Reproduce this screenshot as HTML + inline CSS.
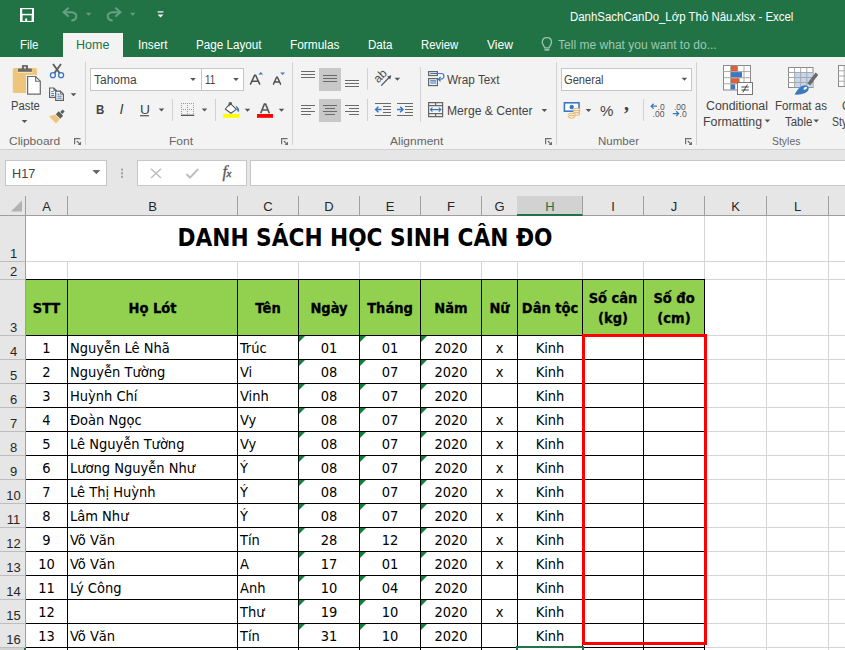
<!DOCTYPE html>
<html lang="vi">
<head>
<meta charset="utf-8">
<title>DanhSachCanDo_Lớp Thỏ Nâu.xlsx - Excel</title>
<style>
*{box-sizing:border-box;margin:0;padding:0}
html,body{width:845px;height:650px;overflow:hidden;background:#fff}
body{position:relative;font-family:"Liberation Sans","DejaVu Sans",sans-serif;font-size:12px;color:#444}
.abs{position:absolute}
#titlebar{position:absolute;left:0;top:0;width:845px;height:57px;background:#217346}
#ribbon{position:absolute;left:0;top:57px;width:845px;height:93px;background:#f3f3f3;border-bottom:1px solid #d0d0d0}
#fbar{position:absolute;left:0;top:150px;width:845px;height:66px;background:#e6e6e6}
.t{position:absolute;white-space:nowrap;line-height:1}
.tab{position:absolute;top:38px;color:#fff;font-size:13px;white-space:nowrap;line-height:15px}
.rl{position:absolute;font-size:12.5px;color:#444;white-space:nowrap;line-height:14px}
.gl{position:absolute;top:134px;font-size:12px;color:#666;white-space:nowrap;line-height:14px}
.sep{position:absolute;top:62px;width:1px;height:83px;background:#d4d4d4}
.box{position:absolute;background:#fff;border:1px solid #c6c6c6}

#hometab{position:absolute;left:63px;top:33px;width:60px;height:24px;background:#f3f3f3}
.lb{position:absolute;white-space:nowrap;transform-origin:0 0;font-family:"Liberation Sans",sans-serif;line-height:normal}
.hl{position:absolute;background:#c8c8c8}
#icons{position:absolute;left:0;top:0;pointer-events:none}
/* sheet */
#sheet{position:absolute;left:0;top:0;width:845px;height:650px;overflow:hidden;font-family:"DejaVu Sans Condensed","DejaVu Sans","Liberation Sans",sans-serif}
#sheet .chs{position:absolute;left:0;top:193px;width:845px;height:23px;background:#e6e6e6;border-bottom:1px solid #9e9e9e}
.ch{position:absolute;top:196px;height:19px;line-height:21px;padding-left:1px;text-align:center;font-size:13px;color:#262626;border-right:1px solid #a0a0a0;font-family:"Liberation Sans",sans-serif}
.ch.sel{background:#d2d2d2;color:#217346;border-bottom:2px solid #217346;top:196px;height:20px;line-height:21px}
.corner{position:absolute;left:0;top:193px}
.rh{position:absolute;left:0;width:26px;background:#e6e6e6;border-right:1px solid #9e9e9e;border-bottom:1px solid #bdbdbd;font-family:"Liberation Sans",sans-serif;font-size:13px;color:#262626;text-align:center}
.rh span{position:absolute;left:2px;right:0px;bottom:0px;line-height:15px}
.gv{position:absolute;top:216px;width:1px;height:434px;background:#d4d4d4}
.gh{position:absolute;left:26px;width:819px;height:1px;background:#d4d4d4}
.title{position:absolute;background:#fff;font-weight:bold;font-size:24.1px;color:#000;text-align:center;line-height:45px;white-space:nowrap}
.hd{position:absolute;background:#92d050;border:1px solid #000;color:#000;font-weight:bold;font-size:14.5px;text-align:center;display:flex;align-items:center;justify-content:center;line-height:20px;white-space:nowrap;padding-top:1px;-webkit-text-stroke:0.3px #000}
.c{position:absolute;background:#fff;border:1px solid #000;color:#000;font-size:14.5px;line-height:23px;padding-top:1px;white-space:nowrap;overflow:hidden}
.c.c{text-align:center}
.c.l{text-align:left;padding-left:2px}
.a{border-left:none !important}
.tri{position:absolute;left:0;top:0;width:0;height:0;border-top:6px solid #15803a;border-right:6px solid transparent}
.rhsel{position:absolute;left:0;width:26px;height:10px;background:#d2d2d2;border-right:2px solid #217346}
.red{position:absolute;left:582px;top:334px;width:125px;height:311px;border:3px solid #ff0000}
.selcell{position:absolute;left:516px;top:646px;width:68px;height:26px;border:2px solid #217346}
</style>
</head>
<body>
<!-- TITLE BAR / TABS -->
<div id="titlebar"></div>
<div id="hometab"></div>
<!-- RIBBON BACKGROUND -->
<div id="ribbon"></div>
<div class="hl" style="left:319px;top:68px;width:22px;height:23px"></div>
<div class="hl" style="left:319px;top:99px;width:22px;height:23px"></div>
<div class="box" style="left:90px;top:68px;width:112px;height:23px"></div>
<div class="box" style="left:201px;top:68px;width:43px;height:23px"></div>
<div class="box" style="left:561px;top:68px;width:131px;height:23px"></div>
<!-- FORMULA BAR -->
<div id="fbar"></div>
<div class="box" style="left:5px;top:160px;width:102px;height:26px"></div>
<div class="box" style="left:137px;top:160px;width:110px;height:26px"></div>
<div class="box" style="left:250px;top:160px;width:600px;height:26px"></div>
<span class="lb" style="left:222.5px;top:162.5px;font-size:16px;color:#5a5a5a;font-family:'Liberation Serif',serif;font-style:italic;-webkit-text-stroke:0.35px #5a5a5a">f<span style="font-size:11px;position:relative;left:-0.5px;top:0.5px">x</span></span>
<span class="lb" style="left:624px;top:91.5px;font-size:20px;color:#444;font-family:'Liberation Serif',serif;font-weight:bold">,</span>
<!-- ICONS -->
<svg id="icons" width="845" height="216" viewBox="0 0 845 216">
<!-- quick access: save -->
<rect x="20" y="8" width="14" height="14" fill="#fff"/>
<rect x="22.2" y="9.2" width="9.8" height="4.6" fill="#217346"/>
<rect x="22.6" y="15.3" width="9" height="5.6" fill="#217346"/>
<rect x="25.2" y="18.4" width="1.9" height="2.6" fill="#fff"/>
<!-- undo / redo (disabled) -->
<g fill="none" stroke="#68a181" stroke-width="2" stroke-linecap="butt" stroke-linejoin="miter">
<path d="M68.6 7.8 L63.6 12.2 L68.6 16.4"/>
<path d="M64.2 12.2 H71 C75.3 12.2 77 14.8 76.2 17.4 C75.6 19.3 73.8 20.3 71.4 20.5"/>
<path d="M115.4 7.8 L120.4 12.2 L115.4 16.4"/>
<path d="M119.8 12.2 H113 C108.7 12.2 107 14.8 107.8 17.4 C108.4 19.3 110.2 20.3 112.6 20.5"/>
</g>
<path d="M85.8 12.8 h5.6 l-2.8 3 z" fill="#659e7e"/>
<path d="M129.9 12.8 h5.6 l-2.8 3 z" fill="#659e7e"/>
<rect x="157.6" y="11.3" width="5.8" height="1.2" fill="#fff"/>
<path d="M157.6 14.4 h5.8 l-2.9 3.2 z" fill="#fff"/>
<!-- lightbulb -->
<path d="M546.9 37.7 C549.9 37.7 551.5 39.8 551.5 42.2 C551.5 44.7 549.5 45.8 549.1 47.9 H544.7 C544.3 45.8 542.3 44.7 542.3 42.2 C542.3 39.8 543.9 37.7 546.9 37.7 Z" fill="none" stroke="#9cc3ad" stroke-width="1.3"/>
<path d="M544.5 49.8 H549.3" fill="none" stroke="#9cc3ad" stroke-width="1.7"/>
<!-- CLIPBOARD GROUP -->
<!-- paste -->
<rect x="12.8" y="67.9" width="24.1" height="25.1" rx="1.6" fill="#edc67c"/>
<rect x="17.4" y="71.7" width="15.2" height="1.2" fill="#f6e3bf"/>
<path d="M18 71.7 V69.4 Q18 68.6 18.8 68.6 H21.9 V65.8 Q21.9 65 22.7 65 H27.2 Q28 65 28 65.8 V68.6 H31.1 Q31.9 68.6 31.9 69.4 V71.7 Z" fill="#6a6a6a"/>
<circle cx="24.95" cy="67.6" r="1.15" fill="#f3e1bd"/>
<path d="M26 74.9 H36.6 L41.9 80.2 V95.8 H26 Z" fill="#f3f3f3"/>
<path d="M27.6 76.5 H35.6 L40.3 81.2 V94.2 H27.6 Z" fill="#fff" stroke="#6a6a6a" stroke-width="1.2" stroke-linejoin="miter"/>
<path d="M35.6 76.5 V81.2 H40.3" fill="none" stroke="#6a6a6a" stroke-width="1.1"/>
<path d="M21.7 120 h5.6 l-2.8 3 z" fill="#555"/>
<!-- cut -->
<path d="M53 64 L59.7 73.3 M61 64 L54.3 73.3" fill="none" stroke="#5e5e5e" stroke-width="1.9"/>
<g fill="none" stroke="#3b78c0" stroke-width="1.3">
<circle cx="52.9" cy="75.2" r="2.5"/><circle cx="61.1" cy="75.2" r="2.5"/>
</g>
<!-- copy -->
<g fill="#fff" stroke="#5f5f5f" stroke-width="1.2">
<path d="M49.6 88 H53.8 L56.4 90.6 V97.3 H49.6 Z"/>
<path d="M55.7 91.2 H60.4 L63.4 94.2 V100.3 H55.7 Z"/>
</g>
<path d="M53.8 88 V90.6 H56.4 M60.4 91.2 V94.2 H63.4" fill="none" stroke="#5f5f5f" stroke-width="0.9"/>
<path d="M51.2 91.6 H53.6 M51.2 93.6 H54.2 M51.2 95.5 H54.2 M57.4 94.2 H59.4 M57.4 96.2 H61.8 M57.4 98.2 H61.8" stroke="#3b78c0" stroke-width="1" fill="none"/>
<path d="M70.7 93.2 h5.6 l-2.8 3 z" fill="#555"/>
<!-- format painter -->
<path d="M62.6 109.5 L64.7 111.6 L62.3 114 L60.2 111.9 Z" fill="#5e5e5e"/>
<path d="M58.7 111.3 L63.1 115.7 L60.3 118.7 L55.8 114.2 Z" fill="#5e5e5e"/>
<path d="M55.1 114.6 L59.8 119.3 L56 123.5 L49.1 116.6 Z" fill="#edc67c"/>
<!-- dialog launchers -->
<path d="M80.5 138.7 H74.6 V144.3" fill="none" stroke="#6e6e6e" stroke-width="1.2"/><path d="M76.8 141 L80 144.2" fill="none" stroke="#6e6e6e" stroke-width="1.2"/><path d="M81 141.6 V145 H77.6 Z" fill="#6e6e6e"/>
<path d="M287.5 138.7 H281.6 V144.3" fill="none" stroke="#6e6e6e" stroke-width="1.2"/><path d="M283.8 141 L287 144.2" fill="none" stroke="#6e6e6e" stroke-width="1.2"/><path d="M288 141.6 V145 H284.6 Z" fill="#6e6e6e"/>
<path d="M551.5 138.7 H545.6 V144.3" fill="none" stroke="#6e6e6e" stroke-width="1.2"/><path d="M547.8 141 L551 144.2" fill="none" stroke="#6e6e6e" stroke-width="1.2"/><path d="M552 141.6 V145 H548.6 Z" fill="#6e6e6e"/>
<path d="M691.5 138.7 H685.6 V144.3" fill="none" stroke="#6e6e6e" stroke-width="1.2"/><path d="M687.8 141 L691 144.2" fill="none" stroke="#6e6e6e" stroke-width="1.2"/><path d="M692 141.6 V145 H688.6 Z" fill="#6e6e6e"/>
<!-- group separators -->
<g stroke="#d2d2d2" stroke-width="1">
<path d="M85.5 62 V145 M292.5 62 V145 M556.5 62 V145 M696.5 62 V145"/>
<path d="M172.5 99 V121 M215.5 99 V121 M367.5 68 V90 M367.5 99 V121 M420.5 67 V122 M643.5 99 V121"/>
</g>
<!-- FONT GROUP -->
<path d="M190.2 78 h5.6 l-2.8 3 z" fill="#555"/>
<path d="M233.2 78 h5.6 l-2.8 3 z" fill="#555"/>
<!-- grow / shrink font -->
<path d="M250.3 84.6 L254.6 75.2 H255.6 L259.9 84.6 M251.9 81.3 H258.3" fill="none" stroke="#505050" stroke-width="1.5"/>
<path d="M258.4 74.6 L260.8 72 L263.2 74.6 Z" fill="#3a78c4"/>
<path d="M273.2 84.6 L276.6 77.2 H277.4 L280.8 84.6 M274.5 82 H279.5" fill="none" stroke="#505050" stroke-width="1.4"/>
<path d="M280.2 72.4 H285 L282.6 75 Z" fill="#3a78c4"/>
<!-- underline bar for U -->
<rect x="140" y="115.2" width="9" height="1.1" fill="#444"/>
<path d="M158.7 108.6 h5.6 l-2.8 3 z" fill="#555"/>
<!-- borders icon -->
<g stroke="#9a9a9a" stroke-width="1" stroke-dasharray="1 1" fill="none">
<path d="M181 103.5 H195 M181 109.5 H195 M181.5 103 V115 M187.5 103 V115 M193.5 103 V115"/>
</g>
<path d="M181 115.3 H194.2" stroke="#505050" stroke-width="1.3"/>
<path d="M201.7 108.6 h5.6 l-2.8 3 z" fill="#555"/>
<!-- fill color -->
<path d="M225.3 109 L230.2 103.3 L236.4 109.4 L230.9 113.2 Z" fill="#fff" stroke="#555" stroke-width="1.1" stroke-linejoin="round"/>
<path d="M229.2 106.4 V102.6 H231.4 V105" fill="none" stroke="#555" stroke-width="1"/>
<path d="M235.4 105.6 Q240 108 239 111.7 Q237.4 112.2 237 109.7 Q236.6 107.5 235.4 105.6 Z" fill="#3b78c0"/>
<rect x="223" y="114" width="16" height="3.8" fill="#ffff00"/>
<path d="M244.7 108.8 h5.6 l-2.8 3 z" fill="#555"/>
<!-- font color -->
<path d="M260.7 113.3 L264.4 104 H265.6 L269.3 113.3 M262.2 110 H267.8" fill="none" stroke="#595959" stroke-width="1.7"/>
<rect x="257" y="114" width="16" height="3.8" fill="#ff0000"/>
<path d="M278.7 108.8 h5.6 l-2.8 3 z" fill="#555"/>
<!-- ALIGNMENT GROUP -->
<g stroke="#6a6a6a" stroke-width="1" fill="none">
<path d="M301 71.5 H315 M301 74.5 H315 M301 77.5 H315"/>
<path d="M323 75.5 H337 M323 78.5 H337 M323 81.5 H337"/>
<path d="M345 80.5 H359 M345 83.5 H359 M345 86.5 H359"/>
<path d="M301 105.5 H315 M301 108.5 H311 M301 111.5 H315 M301 114.5 H311"/>
<path d="M323 105.5 H337 M325 108.5 H335 M323 105.5 M323 111.5 H337 M325 114.5 H335"/>
<path d="M345 105.5 H359 M349 108.5 H359 M345 111.5 H359 M349 114.5 H359"/>
<path d="M375 103.5 H391 M375 115.5 H391 M383 106.5 H391 M383 109.5 H391 M383 112.5 H391"/>
<path d="M397 103.5 H413 M397 115.5 H413 M405 106.5 H413 M405 109.5 H413 M405 112.5 H413"/>
</g>
<g stroke="#3a78c4" stroke-width="1.5" fill="none">
<path d="M375.6 109.5 H381.6 M378.4 106.7 L375.6 109.5 L378.4 112.3"/>
<path d="M397 109.5 H403 M400.2 106.7 L403 109.5 L400.2 112.3"/>
</g>
<!-- orientation -->
<g transform="translate(378.2,83.4) rotate(-45)">
<text x="0" y="0" font-family="Liberation Sans, sans-serif" font-size="12" fill="#4a4a4a">ab</text>
</g>
<path d="M381.2 85.6 L389.6 77" fill="none" stroke="#555" stroke-width="1.3"/><path d="M391.4 75.2 L387.2 76.4 L390.2 79.4 Z" fill="#555"/>
<path d="M394.6 77.8 h5.6 l-2.8 3 z" fill="#555"/>
<!-- wrap text icon -->
<g fill="none" stroke="#666" stroke-width="1.2">
<rect x="428.6" y="71.6" width="8.8" height="3.9"/>
<rect x="428.6" y="78.6" width="8.8" height="7"/>
</g>
<path d="M430.2 73.5 H441.4 Q443.9 73.5 443.9 76 Q443.9 79.2 440.6 79.2 H438.6 M440.6 77 L438.4 79.2 L440.6 81.4 M430.2 80.8 H436 M430.2 83 H436" fill="none" stroke="#3b78c0" stroke-width="1.2"/>
<!-- merge icon -->
<g fill="none" stroke="#666" stroke-width="1.2">
<path d="M428.6 102.6 H442.6 V116.6 H428.6 Z M428.6 105.6 H442.6 M428.6 113.6 H442.6 M435.6 102.6 V105.6 M435.6 113.6 V116.6"/>
</g>
<path d="M430.4 109.6 H440.8 M432.4 107.6 L430.4 109.6 L432.4 111.6 M438.8 107.6 L440.8 109.6 L438.8 111.6" fill="none" stroke="#3b78c0" stroke-width="1.2"/>
<path d="M541.6 108.9 h5.6 l-2.8 3 z" fill="#555"/>
<!-- NUMBER GROUP -->
<path d="M681.6 77.8 h5.6 l-2.8 3 z" fill="#555"/>
<!-- currency -->
<rect x="564.4" y="102.8" width="14.6" height="8.4" fill="#fff" stroke="#3a78c4" stroke-width="1.6"/>
<circle cx="571.7" cy="107" r="2.2" fill="#3a78c4"/>
<g fill="#f3f3f3" stroke="#e8b55e" stroke-width="1">
<ellipse cx="576.6" cy="109.6" rx="3.4" ry="1.3"/><ellipse cx="576.6" cy="111.8" rx="3.4" ry="1.3"/><ellipse cx="576.6" cy="114" rx="3.4" ry="1.3"/>
<ellipse cx="571.6" cy="114.6" rx="3.4" ry="1.3"/><ellipse cx="571.6" cy="116.8" rx="3.4" ry="1.3"/>
</g>
<path d="M585.7 108.9 h5.6 l-2.8 3 z" fill="#555"/>
<!-- inc / dec decimal -->
<g font-family="Liberation Sans, sans-serif" font-size="8.5" fill="#555">
<text x="657.6" y="109.6">.0</text><text x="652.6" y="116.6">.00</text>
<text x="674" y="109.6">.00</text><text x="679.6" y="116.6">.0</text>
</g>
<g fill="none" stroke="#3a78c4" stroke-width="1.3">
<path d="M651.2 106.2 H657 M653.6 103.8 L651.2 106.2 L653.6 108.6"/>
<path d="M672.8 113.6 H678.6 M676.2 111.2 L678.6 113.6 L676.2 116"/>
</g>
<!-- STYLES GROUP -->
<!-- conditional formatting -->
<rect x="723.5" y="65.5" width="27" height="24.5" fill="#fff" stroke="#8a8a8a" stroke-width="1"/>
<path d="M723.5 71.6 H750.5 M723.5 77.7 H750.5 M723.5 83.8 H750.5 M730.5 65.5 V90 M737.5 65.5 V90 M744 65.5 V90" stroke="#a8a8a8" stroke-width="1" fill="none"/>
<rect x="731" y="66" width="6.4" height="5.2" fill="#e0603a"/>
<rect x="731" y="72.1" width="11" height="5.2" fill="#3a78c4"/>
<rect x="731" y="78.2" width="8.6" height="5.2" fill="#e0603a"/>
<rect x="731" y="84.3" width="4.2" height="5.2" fill="#3a78c4"/>
<rect x="737.5" y="82.5" width="15" height="12" fill="#fff" stroke="#777" stroke-width="1"/>
<path d="M741.4 87 H748.8 M741.4 90 H748.8 M747.4 84.6 L742.8 92.4" stroke="#444" stroke-width="1" fill="none"/>
<path d="M764.6 119.5 h5.6 l-2.8 3 z" fill="#555"/>
<!-- format as table -->
<rect x="788.5" y="67.5" width="24.5" height="20" fill="#fff" stroke="#8a8a8a" stroke-width="1"/>
<rect x="795" y="72.6" width="17.6" height="14.6" fill="#c3d8ef"/>
<path d="M788.5 72.5 H813 M788.5 77.5 H813 M788.5 82.5 H813 M794.6 67.5 V87.5 M800.7 67.5 V87.5 M806.8 67.5 V87.5" stroke="#a8a8a8" stroke-width="1" fill="none"/>
<path d="M807.4 83.2 L815.6 72.6 L818.3 74.8 L810.2 85.6 Z" fill="#6b6b6b"/>
<path d="M794.6 94.6 Q798.4 87.6 802.4 85.8 Q806.4 84.2 808.6 87.2 Q809.4 90.8 805.2 93 Q800.6 95 794.6 94.6 Z" fill="#3a78c4"/>
<ellipse cx="805.3" cy="88.2" rx="1.9" ry="1.2" fill="#fff" transform="rotate(-30 805.3 88.2)"/>
<path d="M813.4 119.5 h5.6 l-2.8 3 z" fill="#555"/>
<!-- cell styles (cut off) -->
<rect x="838.5" y="65.5" width="12" height="21" fill="#fff" stroke="#8a8a8a" stroke-width="1"/>
<path d="M838.5 70.8 H850 M838.5 76 H850 M838.5 81.2 H850 M844.2 65.5 V86.5" stroke="#a8a8a8" stroke-width="1" fill="none"/>
<!-- FORMULA BAR ICONS -->
<path d="M92.4 170 h8 l-4 4.2 z" fill="#666"/>
<g fill="#a2a2a2"><rect x="121" y="168.6" width="2" height="2"/><rect x="121" y="172.2" width="2" height="2"/><rect x="121" y="175.8" width="2" height="2"/></g>
<path d="M151 168.8 L161 178 M161 168.8 L151 178" stroke="#bdbdbd" stroke-width="1.5" fill="none"/>
<path d="M186.4 174 L190 177.6 L198.2 169" stroke="#bdbdbd" stroke-width="1.9" fill="none"/>
</svg>
<!-- LABELS -->
<span class="lb" style="left:569.8px;top:9.6px;font-size:12px;color:#fff;transform:scaleX(0.953);">DanhSachCanDo_Lớp Thỏ Nâu.xlsx - Excel</span>
<span class="lb" style="left:20.0px;top:38.3px;font-size:12px;color:#fff;transform:scaleX(0.956);">File</span>
<span class="lb" style="left:75.7px;top:38.3px;font-size:12px;color:#217346;transform:scaleX(1.046);">Home</span>
<span class="lb" style="left:137.7px;top:38.3px;font-size:12px;color:#fff;transform:scaleX(0.983);">Insert</span>
<span class="lb" style="left:196.0px;top:38.3px;font-size:12px;color:#fff;transform:scaleX(0.972);">Page Layout</span>
<span class="lb" style="left:290.1px;top:38.3px;font-size:12px;color:#fff;transform:scaleX(0.988);">Formulas</span>
<span class="lb" style="left:368.0px;top:38.3px;font-size:12px;color:#fff;transform:scaleX(0.966);">Data</span>
<span class="lb" style="left:421.3px;top:38.3px;font-size:12px;color:#fff;transform:scaleX(0.945);">Review</span>
<span class="lb" style="left:486.5px;top:38.3px;font-size:12px;color:#fff;transform:scaleX(1.008);">View</span>
<span class="lb" style="left:558.2px;top:38.3px;font-size:12px;color:#a0c7b1;transform:scaleX(1.004);">Tell me what you want to do...</span>
<span class="lb" style="left:10.9px;top:99.0px;font-size:12px;color:#444;transform:scaleX(0.938);">Paste</span>
<span class="lb" style="left:9.0px;top:134.9px;font-size:11.3px;color:#666;transform:scaleX(1.059);">Clipboard</span>
<span class="lb" style="left:169.0px;top:134.9px;font-size:11.3px;color:#666;transform:scaleX(1.066);">Font</span>
<span class="lb" style="left:389.7px;top:134.9px;font-size:11.3px;color:#666;transform:scaleX(1.061);">Alignment</span>
<span class="lb" style="left:598.3px;top:134.9px;font-size:11.3px;color:#666;transform:scaleX(1.020);">Number</span>
<span class="lb" style="left:772.1px;top:134.9px;font-size:11.3px;color:#666;transform:scaleX(0.923);">Styles</span>
<span class="lb" style="left:93.9px;top:73.2px;font-size:12px;color:#444;transform:scaleX(0.998);">Tahoma</span>
<span class="lb" style="left:205.0px;top:73.2px;font-size:12px;color:#444;transform:scaleX(0.818);">11</span>
<span class="lb" style="left:564.2px;top:73.0px;font-size:12px;color:#444;transform:scaleX(0.927);">General</span>
<span class="lb" style="left:446.5px;top:73.2px;font-size:12px;color:#444;transform:scaleX(0.978);">Wrap Text</span>
<span class="lb" style="left:446.5px;top:103.9px;font-size:12px;color:#444;transform:scaleX(1.011);">Merge &amp; Center</span>
<span class="lb" style="left:706.0px;top:98.9px;font-size:12px;color:#444;transform:scaleX(1.031);">Conditional</span>
<span class="lb" style="left:703.0px;top:115.1px;font-size:12px;color:#444;transform:scaleX(1.030);">Formatting</span>
<span class="lb" style="left:775.3px;top:98.9px;font-size:12px;color:#444;transform:scaleX(0.961);">Format as</span>
<span class="lb" style="left:784.5px;top:115.1px;font-size:12px;color:#444;transform:scaleX(0.952);">Table</span>
<span class="lb" style="left:841.5px;top:98.9px;font-size:12px;color:#444;transform:scaleX(0.943);">Cell</span>
<span class="lb" style="left:831.5px;top:115.1px;font-size:12px;color:#444;transform:scaleX(0.872);">Styles</span>
<span class="lb" style="left:96.2px;top:102.2px;font-size:13px;color:#444;transform:scaleX(0.884);font-weight:bold;">B</span>
<span class="lb" style="left:119.5px;top:101.1px;font-size:14.5px;color:#444;transform:scaleX(1.000);font-style:italic;font-family:"Liberation Serif",serif;">I</span>
<span class="lb" style="left:139.5px;top:102.2px;font-size:13px;color:#444;transform:scaleX(1.065);">U</span>
<span class="lb" style="left:600.1px;top:102.1px;font-size:15px;color:#444;transform:scaleX(1.004);">%</span>
<span class="lb" style="left:12.1px;top:166.5px;font-size:12px;color:#444;transform:scaleX(1.054);">H17</span><!-- SHEET -->
<div id="sheet">
<div class="chs"></div>
<div class="ch" style="left:25px;width:43px">A</div>
<div class="ch" style="left:67px;width:171px">B</div>
<div class="ch" style="left:237px;width:62px">C</div>
<div class="ch" style="left:298px;width:62px">D</div>
<div class="ch" style="left:359px;width:62px">E</div>
<div class="ch" style="left:420px;width:62px">F</div>
<div class="ch" style="left:481px;width:37px">G</div>
<div class="ch sel" style="left:517px;width:66px">H</div>
<div class="ch" style="left:582px;width:62px">I</div>
<div class="ch" style="left:643px;width:62px">J</div>
<div class="ch" style="left:704px;width:63px">K</div>
<div class="ch" style="left:766px;width:63px">L</div>
<div class="ch" style="left:828px;width:63px">M</div>
<svg class="corner" width="25" height="22" viewBox="0 0 25 22"><path d="M22 7.4 L22 18.6 L10.8 18.6 Z" fill="#b2b2b2"/></svg>
<div style="position:absolute;left:25px;top:196px;width:1px;height:20px;background:#9e9e9e"></div>
<div class="rh" style="top:216px;height:46px"><span>1</span></div>
<div class="rh" style="top:262px;height:18px"><span>2</span></div>
<div class="rh" style="top:280px;height:56px"><span>3</span></div>
<div class="rh" style="top:336px;height:24px"><span>4</span></div>
<div class="rh" style="top:360px;height:24px"><span>5</span></div>
<div class="rh" style="top:384px;height:24px"><span>6</span></div>
<div class="rh" style="top:408px;height:24px"><span>7</span></div>
<div class="rh" style="top:432px;height:24px"><span>8</span></div>
<div class="rh" style="top:456px;height:24px"><span>9</span></div>
<div class="rh" style="top:480px;height:24px"><span>10</span></div>
<div class="rh" style="top:504px;height:24px"><span>11</span></div>
<div class="rh" style="top:528px;height:24px"><span>12</span></div>
<div class="rh" style="top:552px;height:24px"><span>13</span></div>
<div class="rh" style="top:576px;height:24px"><span>14</span></div>
<div class="rh" style="top:600px;height:24px"><span>15</span></div>
<div class="rh" style="top:624px;height:24px"><span>16</span></div>
<div class="rh" style="top:648px;height:24px"><span>17</span></div>
<div class="gv" style="left:67px"></div>
<div class="gv" style="left:237px"></div>
<div class="gv" style="left:298px"></div>
<div class="gv" style="left:359px"></div>
<div class="gv" style="left:420px"></div>
<div class="gv" style="left:481px"></div>
<div class="gv" style="left:517px"></div>
<div class="gv" style="left:582px"></div>
<div class="gv" style="left:643px"></div>
<div class="gv" style="left:704px"></div>
<div class="gv" style="left:766px"></div>
<div class="gv" style="left:828px"></div>
<div class="gv" style="left:890px"></div>
<div class="gh" style="top:261px"></div>
<div class="gh" style="top:279px"></div>
<div class="gh" style="top:335px"></div>
<div class="gh" style="top:359px"></div>
<div class="gh" style="top:383px"></div>
<div class="gh" style="top:407px"></div>
<div class="gh" style="top:431px"></div>
<div class="gh" style="top:455px"></div>
<div class="gh" style="top:479px"></div>
<div class="gh" style="top:503px"></div>
<div class="gh" style="top:527px"></div>
<div class="gh" style="top:551px"></div>
<div class="gh" style="top:575px"></div>
<div class="gh" style="top:599px"></div>
<div class="gh" style="top:623px"></div>
<div class="gh" style="top:647px"></div>
<div class="gh" style="top:671px"></div>
<div class="title" style="left:26px;top:216px;width:678px;height:45px">DANH SÁCH HỌC SINH CÂN ĐO</div>
<div class="hd a" style="left:26px;top:279px;width:42px;height:57px"><span>STT</span></div>
<div class="hd" style="left:67px;top:279px;width:171px;height:57px"><span>Họ Lót</span></div>
<div class="hd" style="left:237px;top:279px;width:62px;height:57px"><span>Tên</span></div>
<div class="hd" style="left:298px;top:279px;width:62px;height:57px"><span>Ngày</span></div>
<div class="hd" style="left:359px;top:279px;width:62px;height:57px"><span>Tháng</span></div>
<div class="hd" style="left:420px;top:279px;width:62px;height:57px"><span>Năm</span></div>
<div class="hd" style="left:481px;top:279px;width:37px;height:57px"><span>Nữ</span></div>
<div class="hd" style="left:517px;top:279px;width:66px;height:57px"><span>Dân tộc</span></div>
<div class="hd" style="left:582px;top:279px;width:62px;height:57px"><span>Số cân<br>(kg)</span></div>
<div class="hd" style="left:643px;top:279px;width:62px;height:57px"><span>Số đo<br>(cm)</span></div>
<div class="c c a" style="left:26px;top:335px;width:42px;height:25px">1</div>
<div class="c l" style="left:67px;top:335px;width:171px;height:25px">Nguyễn Lê Nhã</div>
<div class="c l" style="left:237px;top:335px;width:62px;height:25px">Trúc</div>
<div class="c c" style="left:298px;top:335px;width:62px;height:25px"><i class="tri"></i>01</div>
<div class="c c" style="left:359px;top:335px;width:62px;height:25px"><i class="tri"></i>01</div>
<div class="c c" style="left:420px;top:335px;width:62px;height:25px"><i class="tri"></i>2020</div>
<div class="c c" style="left:481px;top:335px;width:37px;height:25px">x</div>
<div class="c c" style="left:517px;top:335px;width:66px;height:25px">Kinh</div>
<div class="c c" style="left:582px;top:335px;width:62px;height:25px"></div>
<div class="c c" style="left:643px;top:335px;width:62px;height:25px"></div>
<div class="c c a" style="left:26px;top:359px;width:42px;height:25px">2</div>
<div class="c l" style="left:67px;top:359px;width:171px;height:25px">Nguyễn Tường</div>
<div class="c l" style="left:237px;top:359px;width:62px;height:25px">Vi</div>
<div class="c c" style="left:298px;top:359px;width:62px;height:25px"><i class="tri"></i>08</div>
<div class="c c" style="left:359px;top:359px;width:62px;height:25px"><i class="tri"></i>07</div>
<div class="c c" style="left:420px;top:359px;width:62px;height:25px"><i class="tri"></i>2020</div>
<div class="c c" style="left:481px;top:359px;width:37px;height:25px">x</div>
<div class="c c" style="left:517px;top:359px;width:66px;height:25px">Kinh</div>
<div class="c c" style="left:582px;top:359px;width:62px;height:25px"></div>
<div class="c c" style="left:643px;top:359px;width:62px;height:25px"></div>
<div class="c c a" style="left:26px;top:383px;width:42px;height:25px">3</div>
<div class="c l" style="left:67px;top:383px;width:171px;height:25px">Huỳnh Chí</div>
<div class="c l" style="left:237px;top:383px;width:62px;height:25px">Vinh</div>
<div class="c c" style="left:298px;top:383px;width:62px;height:25px"><i class="tri"></i>08</div>
<div class="c c" style="left:359px;top:383px;width:62px;height:25px"><i class="tri"></i>07</div>
<div class="c c" style="left:420px;top:383px;width:62px;height:25px"><i class="tri"></i>2020</div>
<div class="c c" style="left:481px;top:383px;width:37px;height:25px"></div>
<div class="c c" style="left:517px;top:383px;width:66px;height:25px">Kinh</div>
<div class="c c" style="left:582px;top:383px;width:62px;height:25px"></div>
<div class="c c" style="left:643px;top:383px;width:62px;height:25px"></div>
<div class="c c a" style="left:26px;top:407px;width:42px;height:25px">4</div>
<div class="c l" style="left:67px;top:407px;width:171px;height:25px">Đoàn Ngọc</div>
<div class="c l" style="left:237px;top:407px;width:62px;height:25px">Vy</div>
<div class="c c" style="left:298px;top:407px;width:62px;height:25px"><i class="tri"></i>08</div>
<div class="c c" style="left:359px;top:407px;width:62px;height:25px"><i class="tri"></i>07</div>
<div class="c c" style="left:420px;top:407px;width:62px;height:25px"><i class="tri"></i>2020</div>
<div class="c c" style="left:481px;top:407px;width:37px;height:25px">x</div>
<div class="c c" style="left:517px;top:407px;width:66px;height:25px">Kinh</div>
<div class="c c" style="left:582px;top:407px;width:62px;height:25px"></div>
<div class="c c" style="left:643px;top:407px;width:62px;height:25px"></div>
<div class="c c a" style="left:26px;top:431px;width:42px;height:25px">5</div>
<div class="c l" style="left:67px;top:431px;width:171px;height:25px">Lê Nguyễn Tường</div>
<div class="c l" style="left:237px;top:431px;width:62px;height:25px">Vy</div>
<div class="c c" style="left:298px;top:431px;width:62px;height:25px"><i class="tri"></i>08</div>
<div class="c c" style="left:359px;top:431px;width:62px;height:25px"><i class="tri"></i>07</div>
<div class="c c" style="left:420px;top:431px;width:62px;height:25px"><i class="tri"></i>2020</div>
<div class="c c" style="left:481px;top:431px;width:37px;height:25px">x</div>
<div class="c c" style="left:517px;top:431px;width:66px;height:25px">Kinh</div>
<div class="c c" style="left:582px;top:431px;width:62px;height:25px"></div>
<div class="c c" style="left:643px;top:431px;width:62px;height:25px"></div>
<div class="c c a" style="left:26px;top:455px;width:42px;height:25px">6</div>
<div class="c l" style="left:67px;top:455px;width:171px;height:25px">Lương Nguyễn Như</div>
<div class="c l" style="left:237px;top:455px;width:62px;height:25px">Ý</div>
<div class="c c" style="left:298px;top:455px;width:62px;height:25px"><i class="tri"></i>08</div>
<div class="c c" style="left:359px;top:455px;width:62px;height:25px"><i class="tri"></i>07</div>
<div class="c c" style="left:420px;top:455px;width:62px;height:25px"><i class="tri"></i>2020</div>
<div class="c c" style="left:481px;top:455px;width:37px;height:25px">x</div>
<div class="c c" style="left:517px;top:455px;width:66px;height:25px">Kinh</div>
<div class="c c" style="left:582px;top:455px;width:62px;height:25px"></div>
<div class="c c" style="left:643px;top:455px;width:62px;height:25px"></div>
<div class="c c a" style="left:26px;top:479px;width:42px;height:25px">7</div>
<div class="c l" style="left:67px;top:479px;width:171px;height:25px">Lê Thị Huỳnh</div>
<div class="c l" style="left:237px;top:479px;width:62px;height:25px">Ý</div>
<div class="c c" style="left:298px;top:479px;width:62px;height:25px"><i class="tri"></i>08</div>
<div class="c c" style="left:359px;top:479px;width:62px;height:25px"><i class="tri"></i>07</div>
<div class="c c" style="left:420px;top:479px;width:62px;height:25px"><i class="tri"></i>2020</div>
<div class="c c" style="left:481px;top:479px;width:37px;height:25px">x</div>
<div class="c c" style="left:517px;top:479px;width:66px;height:25px">Kinh</div>
<div class="c c" style="left:582px;top:479px;width:62px;height:25px"></div>
<div class="c c" style="left:643px;top:479px;width:62px;height:25px"></div>
<div class="c c a" style="left:26px;top:503px;width:42px;height:25px">8</div>
<div class="c l" style="left:67px;top:503px;width:171px;height:25px">Lâm Như</div>
<div class="c l" style="left:237px;top:503px;width:62px;height:25px">Ý</div>
<div class="c c" style="left:298px;top:503px;width:62px;height:25px"><i class="tri"></i>08</div>
<div class="c c" style="left:359px;top:503px;width:62px;height:25px"><i class="tri"></i>07</div>
<div class="c c" style="left:420px;top:503px;width:62px;height:25px"><i class="tri"></i>2020</div>
<div class="c c" style="left:481px;top:503px;width:37px;height:25px">x</div>
<div class="c c" style="left:517px;top:503px;width:66px;height:25px">Kinh</div>
<div class="c c" style="left:582px;top:503px;width:62px;height:25px"></div>
<div class="c c" style="left:643px;top:503px;width:62px;height:25px"></div>
<div class="c c a" style="left:26px;top:527px;width:42px;height:25px">9</div>
<div class="c l" style="left:67px;top:527px;width:171px;height:25px">Võ Văn</div>
<div class="c l" style="left:237px;top:527px;width:62px;height:25px">Tín</div>
<div class="c c" style="left:298px;top:527px;width:62px;height:25px"><i class="tri"></i>28</div>
<div class="c c" style="left:359px;top:527px;width:62px;height:25px"><i class="tri"></i>12</div>
<div class="c c" style="left:420px;top:527px;width:62px;height:25px"><i class="tri"></i>2020</div>
<div class="c c" style="left:481px;top:527px;width:37px;height:25px">x</div>
<div class="c c" style="left:517px;top:527px;width:66px;height:25px">Kinh</div>
<div class="c c" style="left:582px;top:527px;width:62px;height:25px"></div>
<div class="c c" style="left:643px;top:527px;width:62px;height:25px"></div>
<div class="c c a" style="left:26px;top:551px;width:42px;height:25px">10</div>
<div class="c l" style="left:67px;top:551px;width:171px;height:25px">Võ Văn</div>
<div class="c l" style="left:237px;top:551px;width:62px;height:25px">A</div>
<div class="c c" style="left:298px;top:551px;width:62px;height:25px"><i class="tri"></i>17</div>
<div class="c c" style="left:359px;top:551px;width:62px;height:25px"><i class="tri"></i>01</div>
<div class="c c" style="left:420px;top:551px;width:62px;height:25px"><i class="tri"></i>2020</div>
<div class="c c" style="left:481px;top:551px;width:37px;height:25px">x</div>
<div class="c c" style="left:517px;top:551px;width:66px;height:25px">Kinh</div>
<div class="c c" style="left:582px;top:551px;width:62px;height:25px"></div>
<div class="c c" style="left:643px;top:551px;width:62px;height:25px"></div>
<div class="c c a" style="left:26px;top:575px;width:42px;height:25px">11</div>
<div class="c l" style="left:67px;top:575px;width:171px;height:25px">Lý Công</div>
<div class="c l" style="left:237px;top:575px;width:62px;height:25px">Anh</div>
<div class="c c" style="left:298px;top:575px;width:62px;height:25px"><i class="tri"></i>10</div>
<div class="c c" style="left:359px;top:575px;width:62px;height:25px"><i class="tri"></i>04</div>
<div class="c c" style="left:420px;top:575px;width:62px;height:25px"><i class="tri"></i>2020</div>
<div class="c c" style="left:481px;top:575px;width:37px;height:25px"></div>
<div class="c c" style="left:517px;top:575px;width:66px;height:25px">Kinh</div>
<div class="c c" style="left:582px;top:575px;width:62px;height:25px"></div>
<div class="c c" style="left:643px;top:575px;width:62px;height:25px"></div>
<div class="c c a" style="left:26px;top:599px;width:42px;height:25px">12</div>
<div class="c l" style="left:67px;top:599px;width:171px;height:25px"></div>
<div class="c l" style="left:237px;top:599px;width:62px;height:25px">Thư</div>
<div class="c c" style="left:298px;top:599px;width:62px;height:25px"><i class="tri"></i>19</div>
<div class="c c" style="left:359px;top:599px;width:62px;height:25px"><i class="tri"></i>10</div>
<div class="c c" style="left:420px;top:599px;width:62px;height:25px"><i class="tri"></i>2020</div>
<div class="c c" style="left:481px;top:599px;width:37px;height:25px">x</div>
<div class="c c" style="left:517px;top:599px;width:66px;height:25px">Kinh</div>
<div class="c c" style="left:582px;top:599px;width:62px;height:25px"></div>
<div class="c c" style="left:643px;top:599px;width:62px;height:25px"></div>
<div class="c c a" style="left:26px;top:623px;width:42px;height:25px">13</div>
<div class="c l" style="left:67px;top:623px;width:171px;height:25px">Võ Văn</div>
<div class="c l" style="left:237px;top:623px;width:62px;height:25px">Tín</div>
<div class="c c" style="left:298px;top:623px;width:62px;height:25px"><i class="tri"></i>31</div>
<div class="c c" style="left:359px;top:623px;width:62px;height:25px"><i class="tri"></i>10</div>
<div class="c c" style="left:420px;top:623px;width:62px;height:25px"><i class="tri"></i>2020</div>
<div class="c c" style="left:481px;top:623px;width:37px;height:25px"></div>
<div class="c c" style="left:517px;top:623px;width:66px;height:25px">Kinh</div>
<div class="c c" style="left:582px;top:623px;width:62px;height:25px"></div>
<div class="c c" style="left:643px;top:623px;width:62px;height:25px"></div>
<div class="c c a" style="left:26px;top:647px;width:42px;height:25px"></div>
<div class="c c" style="left:67px;top:647px;width:171px;height:25px"></div>
<div class="c c" style="left:237px;top:647px;width:62px;height:25px"></div>
<div class="c c" style="left:298px;top:647px;width:62px;height:25px"></div>
<div class="c c" style="left:359px;top:647px;width:62px;height:25px"></div>
<div class="c c" style="left:420px;top:647px;width:62px;height:25px"></div>
<div class="c c" style="left:481px;top:647px;width:37px;height:25px"></div>
<div class="c c" style="left:517px;top:647px;width:66px;height:25px"></div>
<div class="c c" style="left:582px;top:647px;width:62px;height:25px"></div>
<div class="c c" style="left:643px;top:647px;width:62px;height:25px"></div>
<div class="rhsel" style="top:648px"></div>
<div class="red"></div>
<div class="selcell"></div>
</div></body>
</html>
